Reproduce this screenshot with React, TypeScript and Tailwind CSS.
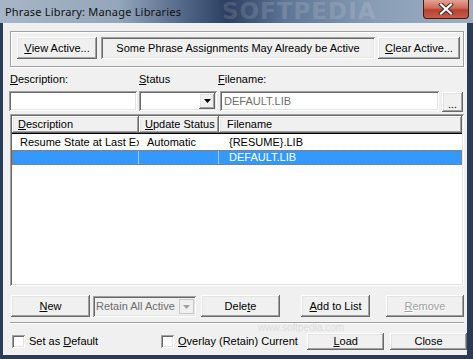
import React from 'react'

// classic win32 3D edges
const raised =
  'shadow-[inset_-1px_-1px_#696969,inset_1px_1px_#ffffff,inset_-2px_-2px_#a0a0a0,inset_2px_2px_#e3e3e3]'
const sunken =
  'shadow-[inset_1px_1px_#a0a0a0,inset_-1px_-1px_#ffffff,inset_2px_2px_#696969,inset_-2px_-2px_#e3e3e3]'

function Btn({
  children,
  className = '',
  disabled = false,
}: {
  children: React.ReactNode
  className?: string
  disabled?: boolean
}) {
  return (
    <div
      className={`flex items-center justify-center whitespace-nowrap bg-[#f0f0f0] ${raised} ${
        disabled ? 'text-[#a0a0a0] [text-shadow:1px_1px_#ffffff]' : 'text-black'
      } ${className}`}
    >
      {children}
    </div>
  )
}

function DropArrow({ color = '#000' }: { color?: string }) {
  return (
    <svg width="7" height="4" viewBox="0 0 7 4">
      <path d="M0 0h7L3.5 4z" fill={color} />
    </svg>
  )
}

function Check({ className = '' }: { className?: string }) {
  return <div className={`w-[13px] h-[13px] shrink-0 bg-white ${sunken} ${className}`} />
}

export default function App() {
  return (
    <div className="w-[473px] h-[359px] flex flex-col bg-[#2a3b58] font-['Liberation_Sans',Arial,sans-serif] text-[11px] text-black overflow-hidden">
      {/* Title bar */}
      <div className="relative h-[23px] shrink-0 flex items-start overflow-hidden bg-[linear-gradient(90deg,#a7b6c7_0%,#94a6bb_25%,#4d6283_40%,#2c3f60_48%,#5e7495_60%,#8a9eb6_80%,#9cafc3_100%)]">
        <span className="pl-[5px] pt-[5px] font-['Noto_Sans',sans-serif] text-[11px] leading-[14px] text-[#111] tracking-[0.2px]">
          Phrase Library: Manage Libraries
        </span>
        <span className="absolute left-[222px] top-[-1px] font-['DejaVu_Sans',sans-serif] font-bold text-[23px] tracking-[1px] text-white/15 leading-[24px] whitespace-nowrap">
          SOFTPEDIA
        </span>
        <div className="absolute left-[423px] top-0 w-[46px] h-[19px] rounded-b-[4px] border border-t-0 border-[#4a1812] bg-[linear-gradient(180deg,#e3a393_0%,#d06a58_45%,#b8402e_55%,#c4604a_100%)] flex items-center justify-center">
          <svg width="16" height="12" viewBox="0 0 16 12">
            <path d="M3 1.5l10 9M13 1.5l-10 9" stroke="#3a2a2a" strokeWidth="4" strokeLinecap="square" />
            <path d="M3 1.5l10 9M13 1.5l-10 9" stroke="#ffffff" strokeWidth="2.2" strokeLinecap="square" />
          </svg>
        </div>
      </div>

      {/* Client area */}
      <div className="ml-[3px] mr-[6px] h-[332px] bg-[#f0f0f0] flex flex-col relative">
        {/* group box */}
        <div className="mt-[8px] ml-[7px] w-[454px] h-[36px] border border-[#a0a0a0] shadow-[inset_1px_1px_#ffffff,1px_1px_#ffffff] flex items-start pt-[5px] pl-[6px] gap-[4px]">
          <Btn className="w-[80px] h-[22px]">
            <u>V</u>iew Active...
          </Btn>
          <div className={`w-[274px] h-[22px] flex items-center justify-center whitespace-nowrap ${sunken}`}>
            Some Phrase Assignments May Already be Active
          </div>
          <Btn className="w-[82px] h-[22px] -ml-[1px]">
            <u>C</u>lear Active...
          </Btn>
        </div>

        {/* labels */}
        <div className="mt-[6px] h-[13px] flex leading-[13px]">
          <span className="ml-[7px] w-[129px]">
            <u>D</u>escription:
          </span>
          <span className="w-[79px]">
            <u>S</u>tatus
          </span>
          <span>
            <u>F</u>ilename:
          </span>
        </div>

        {/* inputs */}
        <div className="mt-[5px] h-[20px] flex items-start">
          <div className={`ml-[6px] w-[128px] h-[20px] bg-white ${sunken}`} />
          <div className={`ml-[2px] w-[78px] h-[20px] bg-white ${sunken} flex justify-end items-start pt-[2px] pr-[2px]`}>
            <div className={`w-[16px] h-[16px] bg-[#f0f0f0] ${raised} flex items-center justify-center`}>
              <DropArrow />
            </div>
          </div>
          <div className={`ml-[3px] w-[219px] h-[20px] bg-white ${sunken} flex items-center pl-[4px] text-[#6d6d6d]`}>
            DEFAULT.LIB
          </div>
          <Btn className="ml-[3px] mt-[1px] w-[21px] h-[20px] items-end pb-[3px] leading-[10px]">...</Btn>
        </div>

        {/* list view */}
        <div className={`mt-[3px] ml-[7px] w-[454px] h-[172px] bg-white ${sunken} p-[2px] flex flex-col`}>
          <div className="h-[18px] flex bg-[#f0f0f0] border-b border-black shrink-0">
            <div className={`w-[127px] h-[17px] flex items-center pl-[6px] ${raised}`}>
              <u>D</u>escription
            </div>
            <div className={`w-[80px] h-[17px] flex items-center pl-[6px] ${raised}`}>
              <u>U</u>pdate Status
            </div>
            <div className={`flex-1 h-[17px] flex items-center pl-[8px] ${raised}`}>Filename</div>
          </div>
          <div className="h-[16px] flex items-center">
            <div className="w-[127px] pl-[8px] pr-[5px] whitespace-nowrap overflow-hidden">Resume State at Last Exit</div>
            <div className="w-[80px] pl-[8px] whitespace-nowrap">Automatic</div>
            <div className="flex-1 pl-[10px]">{'{RESUME}.LIB'}</div>
          </div>
          <div className="h-[15px] flex items-center bg-[#3399ff] text-white border border-dotted border-[#c86a28]">
            <div className="w-[126px] h-full border-r border-[#9ccbff]" />
            <div className="w-[80px] h-full border-r border-[#9ccbff]" />
            <div className="flex-1 pl-[10px]">DEFAULT.LIB</div>
          </div>
        </div>

        {/* action buttons */}
        <div className="mt-[9px] h-[22px] flex items-start">
          <Btn className="ml-[8px] w-[79px] h-[22px]">
            <u>N</u>ew
          </Btn>
          <div className={`ml-[3px] mt-[1px] w-[103px] h-[21px] bg-[#f0f0f0] ${sunken} flex items-center justify-between pl-[3px] pr-[2px] text-[#6d6d6d] whitespace-nowrap`}>
            <span>Retain All Active</span>
            <div className="w-[15px] h-[15px] border border-[#c8c8c8] flex items-center justify-center">
              <DropArrow color="#a0a0a0" />
            </div>
          </div>
          <Btn className="ml-[5px] w-[79px] h-[22px]">
            Dele<u>t</u>e
          </Btn>
          <Btn className="ml-[21px] w-[69px] h-[22px]">
            <u>A</u>dd to List
          </Btn>
          <Btn className="ml-[16px] w-[78px] h-[22px]" disabled>
            <u>R</u>emove
          </Btn>
        </div>

        {/* separator */}
        <div className="mt-[5px] ml-[7px] w-[454px] h-[2px] border-t border-[#a0a0a0] border-b border-b-white" />

        {/* bottom row */}
        <div className="mt-[8px] h-[18px] flex items-center">
          <Check className="ml-[9px]" />
          <span className="ml-[4px] w-[134px] whitespace-nowrap">
            Set as <u>D</u>efault
          </span>
          <Check />
          <span className="ml-[4px] w-[122px] whitespace-nowrap">
            <u>O</u>verlay (Retain) Current
          </span>
          <Btn className="ml-[9px] w-[78px] h-[17px]">
            <u>L</u>oad
          </Btn>
          <Btn className="ml-[6px] w-[78px] h-[17px]">Close</Btn>
        </div>

        <span className="absolute left-[255px] top-[300px] text-[10px] leading-[10px] text-[#dcdcdc]">www.softpedia.com</span>
      </div>
    </div>
  )
}
